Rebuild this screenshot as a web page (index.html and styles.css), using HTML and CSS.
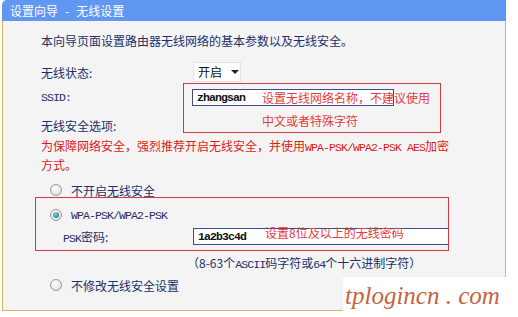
FILE: index.html
```html
<!DOCTYPE html>
<html>
<head>
    <meta charset="utf-8">
    <link rel="stylesheet" href="styles.css">
</head>
<body>
    <div class="page">
        <div class="panel">
            <div class="panel-head">设置向导<span class="dash">-</span>无线设置</div>
            <div class="panel-body">
                <p class="intro">本向导页面设置路由器无线网络的基本参数以及无线安全。</p>
                <div class="row row-status">
                    <span class="label">无线状态:</span>
                    <div class="select">开启<span class="caret"></span></div>
                </div>
                <div class="row row-ssid">
                    <span class="label en">SSID:</span>
                    <div class="input input-ssid en">zhangsan</div>
                </div>
                <div class="row row-opt">
                    <span class="label">无线安全选项:</span>
                </div>
                <p class="warn">为保障网络安全，强烈推荐开启无线安全，并使用<span class="en">WPA-PSK/WPA2-PSK AES</span>加密<br>方式。</p>
                <div class="row radio-row row-off">
                    <span class="radio"></span>不开启无线安全
                </div>
                <div class="row radio-row row-wpa">
                    <span class="radio checked"></span><span class="en">WPA-PSK/WPA2-PSK</span>
                </div>
                <div class="row row-psk">
                    <span class="label label-psk"><span class="en">PSK</span>密码:</span>
                    <div class="input input-psk en">1a2b3c4d</div>
                </div>
                <p class="hint">（8-63个<span class="en">ASCII</span>码字符或<span class="en">64</span>个十六进制字符）</p>
                <div class="row radio-row row-keep">
                    <span class="radio"></span>不修改无线安全设置
                </div>
            </div>
        </div>

        <!-- annotations drawn over the screenshot -->
        <div class="mark mark-ssid"></div>
        <div class="note note-ssid-1">设置无线网络名称，不建议使用</div>
        <div class="note note-ssid-2">中文或者特殊字符</div>
        <div class="mark mark-psk"></div>
        <div class="note note-psk">设置8位及以上的无线密码</div>

        <div class="watermark">tplogincn . com</div>
    </div>
</body>
</html>
```

FILE: styles.css
```css
body {
    margin: 0;
    background: #fff;
    font-family: "Noto Sans CJK SC", "Noto Sans", sans-serif;
    font-size: 12px;
    color: #22306a;
}
.page {
    position: relative;
    width: 518px;
    height: 317px;
    overflow: hidden;
}
.panel {
    width: 504px;
    margin-left: 2px;
}
.panel-head {
    height: 21px;
    line-height: 21px;
    padding-left: 8px;
    background: #6097f3;
    color: #fff;
    border-top-left-radius: 5px;
}
.dash {
    padding: 0 7px;
}
.panel-body {
    box-sizing: border-box;
    height: 290px;
    padding: 10px 0 0 38px;
    background: #f4f4f4;
    border: 1px solid #e6b45a;
    border-top: none;
}
.en {
    font-family: "Liberation Mono", monospace;
    font-size: 11.5px;
    letter-spacing: -0.9px;
}
.intro {
    margin: 0;
    height: 20px;
    line-height: 20px;
}
.row {
    display: flex;
    align-items: center;
    height: 20px;
}
.label {
    width: 152px;
    flex: none;
}
.row-status { margin-top: 11px; }
.row-ssid { margin-top: 5px; }
.row-opt { margin-top: 8px; }
.select {
    box-sizing: border-box;
    width: 48px;
    height: 20px;
    padding-left: 4px;
    background: #fff;
    border: 1px solid #e2e2e2;
    line-height: 18px;
    color: #111;
    display: flex;
    align-items: center;
}
.caret {
    margin-left: 9px;
    border-left: 4px solid transparent;
    border-right: 4px solid transparent;
    border-top: 4px solid #222;
}
.input {
    box-sizing: border-box;
    height: 17px;
    padding-left: 4px;
    background: #fff;
    border: 1px solid #3a4c8c;
    color: #111;
    font-weight: bold;
    line-height: 15px;
}
.input-ssid { width: 202px; margin-left: -1px; }
.input-psk { width: 256px; }
.warn {
    margin: 2px 0 0;
    line-height: 17px;
    color: #dd1a1a;
}
.hint {
    margin: 7px 0 0;
    height: 20px;
    line-height: 20px;
    padding-left: 146px;
}
.radio-row { padding-left: 9px; }
.row-off { margin-top: 7px; }
.row-wpa { margin-top: 5px; }
.row-psk { margin-top: 1px; }
.row-keep { margin-top: 2px; }
.label-psk {
    width: 130px;
    padding-left: 22px;
}
.radio {
    box-sizing: border-box;
    width: 12px;
    height: 12px;
    margin-right: 9px;
    border-radius: 50%;
    border: 1px solid #9a9a9a;
    background: radial-gradient(circle at 40% 35%, #fff 0, #e4e4e4 70%, #cfcfcf 100%);
    display: flex;
    align-items: center;
    justify-content: center;
}
.radio.checked::after {
    content: "";
    width: 6px;
    height: 6px;
    border-radius: 50%;
    background: radial-gradient(circle at 40% 35%, #7fd0e8 0, #2a7aa0 80%);
}
.mark {
    position: absolute;
    border: 1px solid #cf3a48;
}
.mark-ssid { left: 183px; top: 83px; width: 256px; height: 48px; }
.mark-psk { left: 35px; top: 197px; width: 412px; height: 52px; }
.note {
    position: absolute;
    color: #e43b3b;
    line-height: 20px;
}
.note-ssid-1 { left: 262px; top: 88px; }
.note-ssid-2 { left: 262px; top: 111px; }
.note-psk { left: 265px; top: 223px; }
.watermark {
    position: absolute;
    left: 343px;
    top: 277px;
    width: 175px;
    height: 40px;
    padding-left: 2px;
    box-sizing: border-box;
    background: #fff;
    color: #c4643f;
    font-family: "Liberation Serif", serif;
    font-style: italic;
    font-size: 25px;
    line-height: 38px;
    white-space: nowrap;
}
```
